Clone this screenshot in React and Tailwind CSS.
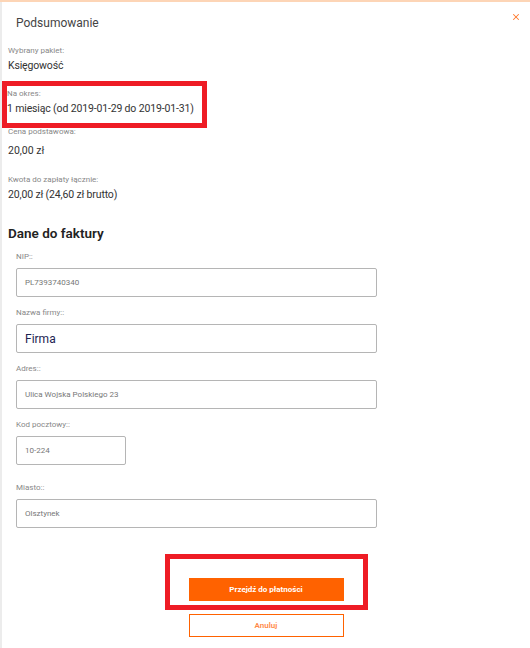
import React from 'react';
import { X } from 'lucide-react';

const Field = ({ label, value, className = 'w-[361px]', big }) => (
    <div className="flex flex-col">
        <label className="text-[8px] leading-[12px] text-[#888]">{label}</label>
        <div className={`mt-[5px] h-[29px] flex items-center border border-[#b5b5b5] rounded-[2px] pl-[8px] ${className}`}>
            <span className={big ? 'text-[12px] text-[#1d2451]' : 'text-[8px] text-[#777]'}>{value}</span>
        </div>
    </div>
);

const Info = ({ label, value }) => (
    <div className="flex flex-col whitespace-nowrap">
        <span className="text-[8px] leading-[12px] text-[#888]">{label}</span>
        <span className="text-[10.5px] leading-[18px] tracking-[-0.15px] text-[#333]">{value}</span>
    </div>
);

export default function App() {
    return (
        <div className="h-[648px] overflow-hidden bg-white border-t-2 border-[#fdd5b6] font-['Roboto',sans-serif]">
            <div className="relative h-full border-l-2 border-[#ececec] pl-[6px]">
                <button className="absolute top-[10px] right-[9px] text-[#ff7a2e]">
                    <X className="w-[10px] h-[10px]" strokeWidth={2.5} />
                </button>

                <h2 className="pt-[11px] pl-[8px] text-[12px] leading-[20px] text-[#444]">Podsumowanie</h2>

                <div className="mt-[12px]">
                    <Info label="Wybrany pakiet:" value="Księgowość" />
                </div>

                {/* highlighted period */}
                <div className="mt-[6px] -ml-[6px] w-[205px] border-[5px] border-[#ee1c25] pt-[2px] pb-[5px]">
                    <Info label="Na okres:" value="1 miesiąc (od 2019-01-29 do 2019-01-31)" />
                </div>

                <div className="-mt-[1px] flex flex-col">
                    <span className="text-[8px] leading-[10px] text-[#888]">Cena podstawowa:</span>
                    <span className="mt-[5px] text-[10.5px] leading-[18px] text-[#333]">20,00 zł</span>
                </div>

                <div className="mt-[14px]">
                    <Info label="Kwota do zapłaty łącznie:" value="20,00 zł (24,60 zł brutto)" />
                </div>

                <h3 className="mt-[19px] text-[13.5px] leading-[20px] font-semibold text-[#222]">Dane do faktury</h3>

                <div className="pl-[8px] flex flex-col">
                    <div className="mt-[8px]">
                        <Field label="NIP::" value="PL7393740340" />
                    </div>
                    <div className="mt-[10px]">
                        <Field label="Nazwa firmy::" value="Firma" big />
                    </div>
                    <div className="mt-[10px]">
                        <Field label="Adres::" value="Ulica Wojska Polskiego 23" />
                    </div>
                    <div className="mt-[10px]">
                        <Field label="Kod pocztowy::" value="10-224" className="w-[110px]" />
                    </div>
                    <div className="mt-[17px]">
                        <Field label="Miasto::" value="Olsztynek" />
                    </div>
                </div>

                <div className="mt-[26px] flex flex-col items-center -ml-[6px]">
                    <div className="w-[203px] border-[5px] border-[#ee1c25] pt-[19px] pb-[4px] flex justify-center">
                        <button className="w-[155px] h-[23px] bg-[#ff6200] text-white text-[8px] font-bold">
                            Przejdź do płatności
                        </button>
                    </div>
                    <button className="mt-[4px] w-[155px] h-[23px] border border-[#ff6200] text-[#ff8a4a] text-[8px] font-semibold">
                        Anuluj
                    </button>
                </div>
            </div>
        </div>
    );
}
